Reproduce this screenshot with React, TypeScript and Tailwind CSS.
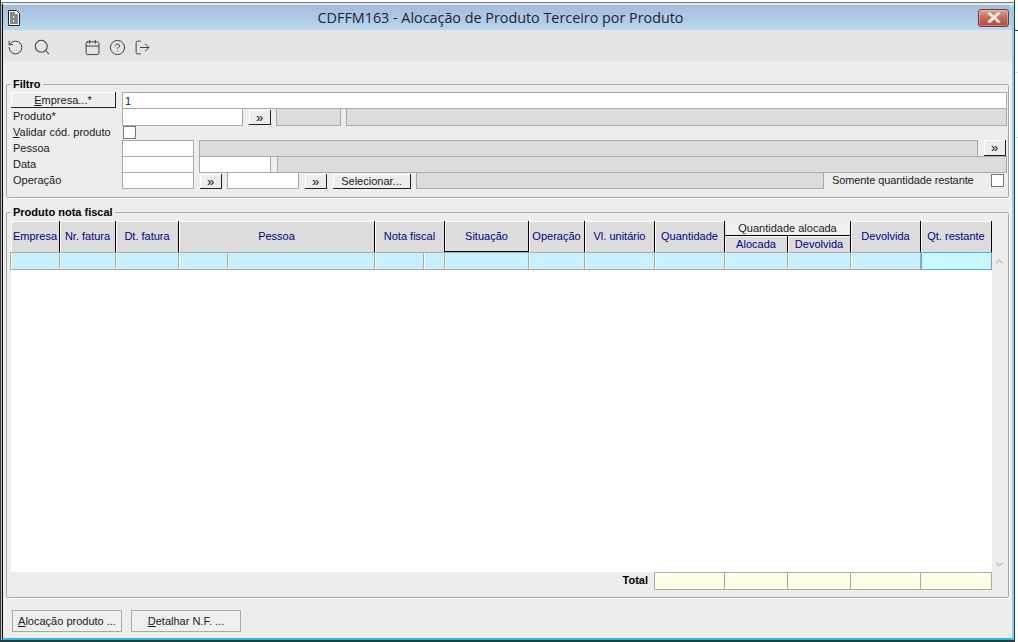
import { RotateCcw, Search, Calendar, CircleHelp, LogOut, ChevronUp, ChevronDown } from "lucide-react";

const txt = "text-[11px] leading-[16px] text-[#1a1a1a] whitespace-nowrap";
const input = "h-[17px] shrink-0 bg-white border border-[#a9a9a9]";
const off = "h-[17px] bg-[#dcdcdc] border border-[#a9a9a9]";
const hd = "shrink-0 h-full flex items-center justify-center bg-[#dcdcdc] border-r border-black shadow-[inset_1px_1px_0_#fff] text-[11px] text-[#00008b] whitespace-nowrap";
const cell = "shrink-0 h-full bg-[#c9eeff] border-r border-[#a9a9a9] shadow-[inset_1px_0_0_#fff]";
const tot = "shrink-0 h-full bg-[#ffffe6] border-r border-[#a9a9b4]";

function More({ className = "" }: { className?: string }) {
  return (
    <button className={`h-[15px] w-[22px] shrink-0 flex items-center justify-center bg-[#ededed] border-r border-b border-[#222] shadow-[inset_1px_1px_0_#fff] text-[13px] leading-none text-[#111] font-normal ${className}`}>
      »
    </button>
  );
}

export default function App() {
  return (
    <div className="w-[1018px] h-[642px] bg-white flex overflow-hidden font-['Liberation_Sans',Arial,sans-serif]">
      <div className="w-[1015px] h-[642px] pt-[2px] border-l border-b-[2px] border-r border-[#2e3a42]">
        <div className="h-full border-l border-[#c4c4c4] border-t border-t-[#777]">
          <div className="h-full flex flex-col border-l border-l-black border-t-[2px] border-t-[#e4e8ec] border-r-[2px] border-r-[#8fd0ee] border-b-[2px] border-b-[#27bde6] rounded-tr-[4px]">
            {/* title bar */}
            <div className="h-[25px] shrink-0 flex items-center bg-gradient-to-b from-[#a2bcdb] to-[#bbd6f0] rounded-tr-[4px]">
              <svg width="12" height="16" viewBox="0 0 12 16" className="ml-[5px] shrink-0">
                <path d="M.5.5h8l3 3v12H.5z" fill="#fff" stroke="#222" />
                <path d="M2 3h5M2 5h8M2 7h3M6 7h4M2 9h8M2 11h3M6 11h4M2 13h8" stroke="#111" strokeWidth="1.2" />
              </svg>
              <div className="flex-1 text-center pl-[3px] text-[14.35px] text-[#1c2430] font-['Open_Sans',sans-serif] whitespace-nowrap">
                CDFFM163 - Alocação de Produto Terceiro por Produto
              </div>
              <div className="w-[31px] h-[18px] mr-[3px] shrink-0 flex items-center justify-center rounded-[3px] border border-[#6e3a3a] bg-gradient-to-b from-[#d8a090] via-[#c8685a] to-[#b84a38] shadow-[inset_0_0_0_1px_rgba(255,255,255,0.3)]">
                <svg width="14" height="11" viewBox="0 0 14 11">
                  <path d="M2.5 1.5l9 8M11.5 1.5l-9 8" stroke="#e8e8e8" strokeWidth="3" strokeLinecap="square" />
                </svg>
              </div>
            </div>
            {/* toolbar */}
            <div className="h-[31px] shrink-0 flex items-center pt-[3px] bg-[#e4e4e4] text-[#404040]">
              <RotateCcw size={17} strokeWidth={1.4} className="ml-[4px]" />
              <Search size={18} strokeWidth={1.4} className="ml-[9px]" />
              <Calendar size={17} strokeWidth={1.4} className="ml-[33px]" />
              <CircleHelp size={17} strokeWidth={1.4} className="ml-[8px]" />
              <LogOut size={17} strokeWidth={1.4} className="ml-[8px]" />
            </div>
            {/* content */}
            <div className="flex-1 min-h-0 bg-[#ededed] flex flex-col pl-[3px] pr-[3px] pt-[17px]">
              <fieldset className="h-[120px] shrink-0 border border-[#a9a9a9] rounded-[2px] pl-[4px] pr-[1px] pt-[1px] shadow-[1px_1px_0_#fff]">
                <legend className="ml-[0px] px-[2px] text-[11px] leading-[13px] font-bold text-black">Filtro</legend>
                <div className="flex flex-col">
                  <div className="h-[16px] flex items-start">
                    <button className={`w-[105px] h-[16px] shrink-0 bg-[#ededed] border-r border-b border-[#222] shadow-[inset_1px_1px_0_#fff] text-center ${txt}`}>
                      <u>E</u>mpresa...*
                    </button>
                    <div className={`${input} flex-1 ml-[6px] pl-[2px] ${txt}`}>1</div>
                  </div>
                  <div className="h-[16px] flex items-start">
                    <span className={`w-[111px] pl-[2px] shrink-0 ${txt}`}>Produto*</span>
                    <div className={`${input} h-[18px] w-[121px]`} />
                    <More className="ml-[6px] mt-[2px]" />
                    <div className={`${off} h-[18px] w-[65px] shrink-0 ml-[5px]`} />
                    <div className={`${off} h-[18px] flex-1 ml-[5px]`} />
                  </div>
                  <div className="h-[16px] flex items-start">
                    <span className={`w-[111px] pl-[2px] shrink-0 ${txt}`}><u>V</u>alidar cód. produto</span>
                    <div className="w-[13px] h-[13px] ml-[1px] mt-[2px] bg-white border border-[#777]" />
                  </div>
                  <div className="h-[16px] flex items-start">
                    <span className={`w-[111px] pl-[2px] shrink-0 ${txt}`}>Pessoa</span>
                    <div className={`${input} w-[72px]`} />
                    <div className={`${off} flex-1 ml-[5px]`} />
                    <More className="ml-[6px] w-[21px] h-[16px] mr-[1px]" />
                  </div>
                  <div className="h-[16px] flex items-start">
                    <span className={`w-[111px] pl-[2px] shrink-0 ${txt}`}>Data</span>
                    <div className={`${input} w-[72px]`} />
                    <div className={`${input} w-[72px] ml-[5px]`} />
                    <div className={`${off} flex-1 ml-[6px]`} />
                  </div>
                  <div className="h-[16px] flex items-start">
                    <span className={`w-[111px] pl-[2px] shrink-0 ${txt}`}>Operação</span>
                    <div className={`${input} w-[72px]`} />
                    <More className="ml-[6px] mt-[2px]" />
                    <div className={`${input} w-[72px] ml-[5px]`} />
                    <More className="ml-[6px] mt-[2px]" />
                    <button className={`w-[78px] h-[15px] ml-[6px] mt-[2px] shrink-0 flex items-center justify-center bg-[#ededed] border-r border-b border-[#222] shadow-[inset_1px_1px_0_#fff] ${txt}`}>
                      Selecionar...
                    </button>
                    <div className={`${off} w-[408px] shrink-0 ml-[5px]`} />
                    <span className={`ml-[8px] w-[159px] shrink-0 tracking-[-0.1px] ${txt}`}>Somente quantidade restante</span>
                    <div className="w-[13px] h-[13px] mt-[2px] bg-white border border-[#777]" />
                  </div>
                </div>
              </fieldset>

              <fieldset className="h-[392px] mt-[8px] shrink-0 border border-[#a9a9a9] rounded-[2px] pl-[4px] pt-[2px] flex flex-col shadow-[1px_1px_0_#fff]">
                <legend className="ml-[0px] px-[2px] text-[11px] leading-[13px] font-bold text-black">Produto nota fiscal</legend>
                <div className="flex flex-col w-[995px] h-[369px]">
                  {/* header */}
                  <div className="h-[31px] flex shrink-0 w-[981px]">
                    <div className={`${hd} w-[49px]`}>Empresa</div>
                    <div className={`${hd} w-[56px]`}>Nr. fatura</div>
                    <div className={`${hd} w-[63px]`}>Dt. fatura</div>
                    <div className={`${hd} w-[196px]`}>Pessoa</div>
                    <div className={`${hd} w-[70px]`}>Nota fiscal</div>
                    <div className={`${hd} w-[84px] border-b`}>Situação</div>
                    <div className={`${hd} w-[56px]`}>Operação</div>
                    <div className={`${hd} w-[70px]`}>Vl. unitário</div>
                    <div className={`${hd} w-[70px]`}>Quantidade</div>
                    <div className="w-[126px] h-full shrink-0 flex flex-col border-r border-black">
                      <div className="h-[15px] shrink-0 flex items-center justify-center bg-[#efefef] border-b border-black text-[11px] text-[#1a1a1a]">Quantidade alocada</div>
                      <div className="flex-1 flex min-h-0">
                        <div className={`${hd} w-[63px]`}>Alocada</div>
                        <div className="flex-1 h-full flex items-center justify-center bg-[#dcdcdc] shadow-[inset_1px_1px_0_#fff] text-[11px] text-[#00008b]">Devolvida</div>
                      </div>
                    </div>
                    <div className={`${hd} w-[70px]`}>Devolvida</div>
                    <div className={`${hd} w-[71px]`}>Qt. restante</div>
                  </div>
                  <div className="flex-1 min-h-0 flex">
                    <div className="w-[981px] shrink-0 flex flex-col">
                      {/* selected row */}
                      <div className="h-[18px] shrink-0 flex -ml-[1px] w-[982px] border-t border-b border-l border-[#a9a9a9]">
                        <div className={`${cell} w-[49px]`} />
                        <div className={`${cell} w-[56px]`} />
                        <div className={`${cell} w-[63px]`} />
                        <div className={`${cell} w-[49px]`} />
                        <div className={`${cell} w-[147px]`} />
                        <div className={`${cell} w-[49px]`} />
                        <div className={`${cell} w-[21px]`} />
                        <div className={`${cell} w-[84px]`} />
                        <div className={`${cell} w-[56px]`} />
                        <div className={`${cell} w-[70px]`} />
                        <div className={`${cell} w-[70px]`} />
                        <div className={`${cell} w-[63px]`} />
                        <div className={`${cell} w-[63px]`} />
                        <div className={`${cell} w-[70px]`} />
                        <div className="flex-1 h-full -my-[1px] box-content bg-[#c8f8ff] border border-[#5fa3e0]" />
                      </div>
                      <div className="flex-1 min-h-0 bg-white" />
                      {/* totals */}
                      <div className="h-[18px] shrink-0 flex items-stretch">
                        <div className="w-[643px] shrink-0 pr-[6px] text-right text-[11px] leading-[16px] font-bold text-black">Total</div>
                        <div className="flex-1 flex border border-[#a9a9b4]">
                          <div className={`${tot} w-[70px]`} />
                          <div className={`${tot} w-[63px]`} />
                          <div className={`${tot} w-[63px]`} />
                          <div className={`${tot} w-[70px]`} />
                          <div className="flex-1 h-full bg-[#ffffe6]" />
                        </div>
                      </div>
                    </div>
                    <div className="w-[14px] shrink-0 h-[319px] flex flex-col justify-between items-center text-[#bdbdbd]">
                      <ChevronUp size={11} strokeWidth={3} className="mt-[4px]" />
                      <ChevronDown size={11} strokeWidth={3} className="mb-[1px]" />
                    </div>
                  </div>
                </div>
              </fieldset>

              <div className="flex gap-[9px] mt-[12px] pl-[6px]">
                <button className={`w-[110px] h-[22px] flex items-center justify-center bg-[#efefef] border border-[#a9a9a9] ${txt}`}>
                  <span><u>A</u>locação produto ...</span>
                </button>
                <button className={`w-[110px] h-[22px] flex items-center justify-center bg-[#efefef] border border-[#a9a9a9] ${txt}`}>
                  <span><u>D</u>etalhar N.F. ...</span>
                </button>
              </div>
            </div>
          </div>
        </div>
      </div>
      <div className="w-[3px] flex flex-col">
        <div className="h-[1px] mt-[30px] bg-[#333]" />
        <div className="h-[1px] mt-[41px] bg-[#ddd]" />
        <div className="h-[1px] mt-[64px] bg-[#ddd]" />
      </div>
    </div>
  );
}
